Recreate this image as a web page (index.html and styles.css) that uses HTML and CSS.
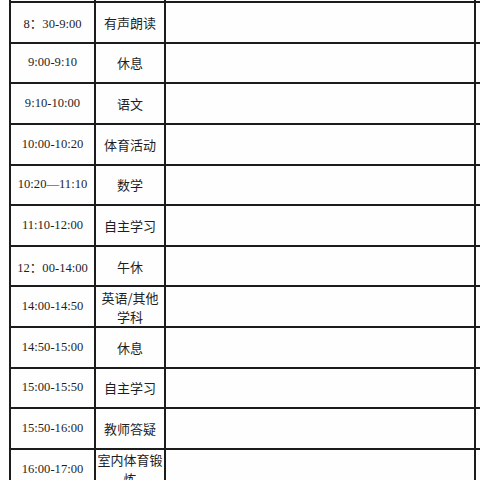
FILE: index.html
```html
<!DOCTYPE html>
<html lang="zh">
<head>
<meta charset="utf-8">
<title>作息时间表</title>
<link rel="stylesheet" href="styles.css">
</head>
<body>
<div class="sheet">
  <div class="cell"></div><div class="cell"></div><div class="cell"></div><div class="cell"></div>

  <div class="cell time">8：30-9:00</div><div class="cell subj">有声朗读</div><div class="cell"></div><div class="cell"></div>
  <div class="cell time">9:00-9:10</div><div class="cell subj">休息</div><div class="cell"></div><div class="cell"></div>
  <div class="cell time">9:10-10:00</div><div class="cell subj">语文</div><div class="cell"></div><div class="cell"></div>
  <div class="cell time">10:00-10:20</div><div class="cell subj">体育活动</div><div class="cell"></div><div class="cell"></div>
  <div class="cell time">10:20—11:10</div><div class="cell subj">数学</div><div class="cell"></div><div class="cell"></div>
  <div class="cell time">11:10-12:00</div><div class="cell subj">自主学习</div><div class="cell"></div><div class="cell"></div>
  <div class="cell time">12：00-14:00</div><div class="cell subj">午休</div><div class="cell"></div><div class="cell"></div>
  <div class="cell time">14:00-14:50</div><div class="cell subj">英语/其他学科</div><div class="cell"></div><div class="cell"></div>
  <div class="cell time">14:50-15:00</div><div class="cell subj">休息</div><div class="cell"></div><div class="cell"></div>
  <div class="cell time">15:00-15:50</div><div class="cell subj">自主学习</div><div class="cell"></div><div class="cell"></div>
  <div class="cell time">15:50-16:00</div><div class="cell subj">教师答疑</div><div class="cell"></div><div class="cell"></div>
  <div class="cell time">16:00-17:00</div><div class="cell subj">室内体育锻炼</div><div class="cell"></div><div class="cell"></div>
</div>
</body>
</html>
```
FILE: styles.css
```css
html, body {
  margin: 0;
  padding: 0;
  background: #ffffff;
  overflow: hidden;
  width: 480px;
  height: 480px;
}

.sheet {
  display: grid;
  grid-template-columns: 83px 68px 308px 100px;
  grid-auto-rows: 38.64px;
  gap: 2px;
  padding: 0 0 2px 2px;
  margin: -37.64px 0 0 9px;
  width: max-content;
  background: #1c1c1c;
}

.cell {
  background: #fefefe;
  display: flex;
  align-items: center;
  justify-content: center;
  text-align: center;
  color: #1e1e1e;
  padding: 0;
  overflow: visible;
}

.time {
  font-family: "Liberation Serif", "Noto Sans CJK SC", serif;
  font-size: 12.6px;
  white-space: nowrap;
}

.subj {
  font-family: "Noto Sans CJK SC", "Noto Sans", sans-serif;
  font-size: 13px;
  line-height: 19px;
}
```
